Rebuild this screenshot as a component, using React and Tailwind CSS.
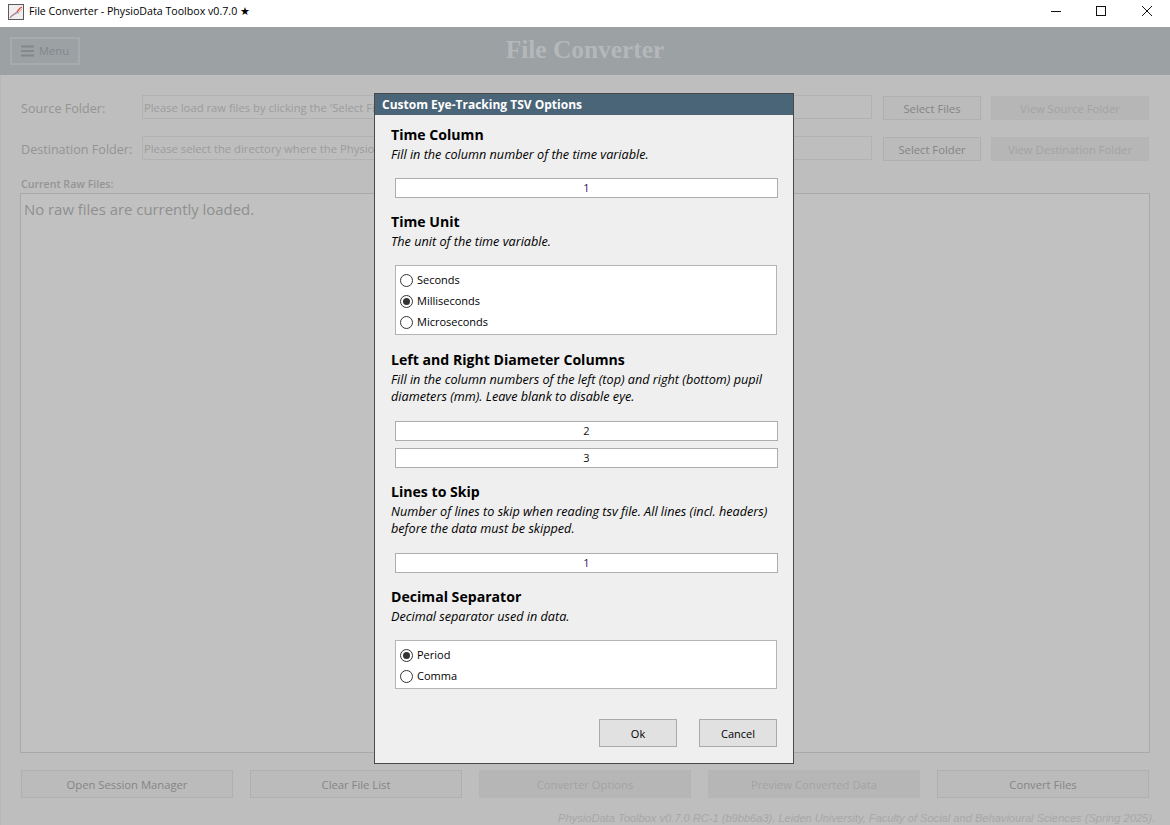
import React from "react";

const SANS = "font-['Open_Sans','Noto_Sans',sans-serif]";

function BgButton({ label, className = "", disabled = false }) {
  return (
    <div
      className={`flex items-center justify-center border pt-[2px] text-[11.25px] ${className} ${
        disabled
          ? "border-[#b5b5b5] bg-[#b6b6b6] text-[#a3a3a3]"
          : "border-[#b0b0b0] bg-[#bbbbbb] text-[#858585]"
      }`}
    >
      {label}
    </div>
  );
}

function Radio({ label, checked }) {
  return (
    <div className="flex h-[21px] items-center gap-[4px]">
      <span className="flex h-[13px] w-[13px] items-center justify-center rounded-full border border-[#333333] bg-white">
        {checked && <span className="h-[7px] w-[7px] rounded-full bg-[#333333]" />}
      </span>
      <span className="text-[11px] text-black">{label}</span>
    </div>
  );
}

function Field({ value, purple }) {
  return (
    <div
      className={`ml-[4px] flex h-[20px] w-[383px] items-center justify-center border border-[#adadad] bg-white text-[11px] ${
        purple ? "text-[#3a0d5c]" : "text-[#111111]"
      }`}
    >
      {value}
    </div>
  );
}

function Head({ title, children }) {
  return (
    <div>
      <div className="text-[14.1px] font-bold leading-[20px] text-black">{title}</div>
      <div className="mt-[1px] text-[12.65px] italic leading-[17px] text-black">{children}</div>
    </div>
  );
}

function RadioBox({ children, className = "" }) {
  return (
    <div className={`ml-[4px] flex w-[382px] flex-col border border-[#b4b4b4] bg-white px-[4px] pt-[4px] ${className}`}>
      {children}
    </div>
  );
}

function PathInput({ children }) {
  return (
    <div className="flex h-[24px] w-[730px] items-center overflow-hidden whitespace-nowrap border border-[#b2b2b2] pl-[1px] pt-[2px] text-[11.25px] text-[#9c9c9c]">
      {children}
    </div>
  );
}

export default function App() {
  return (
    <div className={`relative flex h-[825px] w-[1170px] flex-col overflow-hidden bg-[#bebebe] ${SANS}`}>
      <div className="flex h-[27px] shrink-0 items-center bg-white pl-[8px]">
        <svg width="16" height="16" viewBox="0 0 16 16" className="-mt-[3px] shrink-0">
          <rect x="0.5" y="0.5" width="15" height="15" fill="#f2eeee" stroke="#5a5a5a" />
          <path d="M2 14 C5 9 7 11 9 8 C10.5 6 11 4 14 3" fill="none" stroke="#d8453a" strokeWidth="1.2" />
          <path d="M2 13 C5 11 9 10 14 5" fill="none" stroke="#e8a08a" strokeWidth="1" />
          <path d="M2 14 L8 8.5 L11 9" fill="none" stroke="#7aa5d8" strokeWidth="1" />
        </svg>
        <span className="-mt-[3px] ml-[5px] text-[10.65px] text-black">File Converter - PhysioData Toolbox v0.7.0 ★</span>
        <div className="ml-auto flex h-full items-center">
          <svg width="46" height="27" viewBox="0 0 46 27">
            <path d="M19 11.5 H29" stroke="#111" strokeWidth="1" />
          </svg>
          <svg width="46" height="27" viewBox="0 0 46 27">
            <rect x="18.5" y="6.5" width="9" height="9" fill="none" stroke="#111" strokeWidth="1" />
          </svg>
          <svg width="46" height="27" viewBox="0 0 46 27">
            <path d="M18 6 L28 16 M28 6 L18 16" stroke="#111" strokeWidth="1" />
          </svg>
        </div>
      </div>

      <div className="relative flex h-[48px] shrink-0 items-center bg-[#9ca1a4] pl-[10px]">
        <div className="flex h-[28px] w-[70px] items-center justify-center gap-[5px] border-2 border-[#a7abad] text-[11.25px] text-[#84888b]">
          <svg width="13" height="12" viewBox="0 0 13 12">
            <path d="M0 1.5 H13 M0 6 H13 M0 10.5 H13" stroke="#84888b" strokeWidth="2" />
          </svg>
          Menu
        </div>
        <div className="absolute inset-x-0 top-[7px] text-center font-['Liberation_Serif',serif] text-[25.4px] font-bold leading-[30px] text-[#b4b8ba]">
          File Converter
        </div>
      </div>

      <div className="flex flex-1 flex-col border-l border-[#b8b8b8] pl-[20px] pr-[21px] text-[#949494]">
        <div className="mt-[20px] flex h-[25px] items-start">
          <span className="mt-[2px] w-[121px] text-[12.6px] leading-[24px]">Source Folder:</span>
          <PathInput>Please load raw files by clicking the 'Select Files' button</PathInput>
          <BgButton label="Select Files" className="ml-[11px] mt-[1px] h-[24px] w-[98px]" />
          <BgButton label="View Source Folder" disabled className="ml-[10px] mt-[1px] h-[24px] w-[158px]" />
        </div>
        <div className="mt-[16px] flex h-[25px] items-start">
          <span className="mt-[2px] w-[121px] text-[12.6px] leading-[24px]">Destination Folder:</span>
          <PathInput>Please select the directory where the PhysioData files will be stored</PathInput>
          <BgButton label="Select Folder" className="ml-[11px] mt-[1px] h-[24px] w-[98px]" />
          <BgButton label="View Destination Folder" disabled className="ml-[10px] mt-[1px] h-[24px] w-[158px]" />
        </div>
        <div className="mt-[16px] text-[10.6px] font-semibold leading-[15px] text-[#949494]">Current Raw Files:</div>
        <div className="-ml-[1px] -mr-[1px] mt-[1px] h-[560px] border border-[#a9a9a9] bg-[#c1c1c1] pl-[3px] pt-[4px] text-[14.9px] text-[#8f8f8f]">
          No raw files are currently loaded.
        </div>
        <div className="mt-[17px] flex justify-between">
          <BgButton label="Open Session Manager" className="h-[28px] w-[212px]" />
          <BgButton label="Clear File List" className="h-[28px] w-[212px]" />
          <BgButton label="Converter Options" disabled className="h-[28px] w-[212px]" />
          <BgButton label="Preview Converted Data" disabled className="h-[28px] w-[212px]" />
          <BgButton label="Convert Files" className="h-[28px] w-[212px]" />
        </div>
        <div className="-mr-[6px] mt-[13px] whitespace-nowrap text-right font-['Liberation_Sans',sans-serif] text-[11.1px] italic leading-[14px] text-[#a7a7a7]">
          PhysioData Toolbox v0.7.0 RC-1 (b9bb6a3). Leiden University, Faculty of Social and Behavioural Sciences (Spring 2025).
        </div>
      </div>

      <div className="absolute left-[374px] top-[93px] flex h-[671px] w-[420px] flex-col border border-[#4a4a4a] bg-[#efefef]">
        <div className="flex h-[21px] shrink-0 items-center bg-[#4a6478] pl-[7px] text-[12px] font-bold text-white">
          Custom Eye-Tracking TSV Options
        </div>
        <div className="flex flex-1 flex-col px-[16px] pt-[10px]">
          <Head title="Time Column">Fill in the column number of the time variable.</Head>
          <div className="mt-[15px]"><Field value="1" purple /></div>
          <div className="mt-[14px]">
            <Head title="Time Unit">The unit of the time variable.</Head>
          </div>
          <div className="mt-[15px]">
            <RadioBox className="h-[70px]">
              <Radio label="Seconds" />
              <Radio label="Milliseconds" checked />
              <Radio label="Microseconds" />
            </RadioBox>
          </div>
          <div className="mt-[15px]">
            <Head title="Left and Right Diameter Columns">
              Fill in the column numbers of the left (top) and right (bottom) pupil diameters (mm). Leave blank to disable eye.
            </Head>
          </div>
          <div className="mt-[16px]"><Field value="2" /></div>
          <div className="mt-[7px]"><Field value="3" /></div>
          <div className="mt-[14px]">
            <Head title="Lines to Skip">
              Number of lines to skip when reading tsv file. All lines (incl. headers) before the data must be skipped.
            </Head>
          </div>
          <div className="mt-[16px]"><Field value="1" purple /></div>
          <div className="mt-[14px]">
            <Head title="Decimal Separator">Decimal separator used in data.</Head>
          </div>
          <div className="mt-[15px]">
            <RadioBox className="h-[49px]">
              <Radio label="Period" checked />
              <Radio label="Comma" />
            </RadioBox>
          </div>
          <div className="mt-[30px] flex justify-end gap-[22px]">
            <div className="flex h-[28px] w-[78px] items-center justify-center border border-[#aaaaaa] bg-[#e1e1e1] pt-[2px] text-[11px] text-black">Ok</div>
            <div className="flex h-[28px] w-[78px] items-center justify-center border border-[#aaaaaa] bg-[#e1e1e1] pt-[2px] text-[11px] text-black">Cancel</div>
          </div>
        </div>
      </div>
    </div>
  );
}
